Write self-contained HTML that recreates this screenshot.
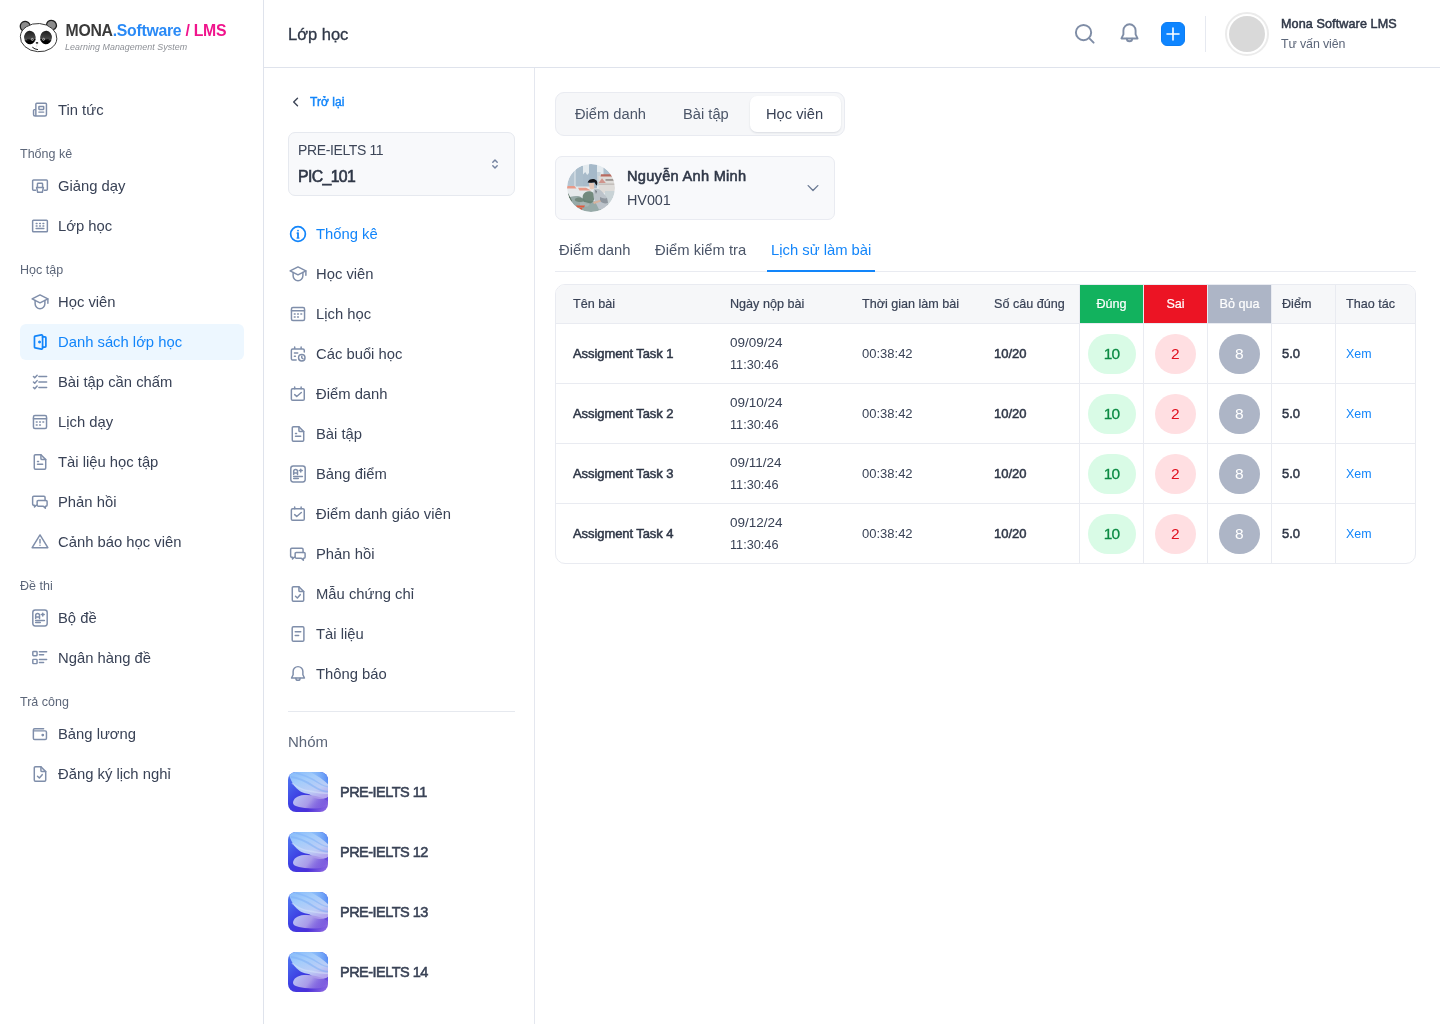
<!DOCTYPE html>
<html lang="vi">
<head>
<meta charset="utf-8">
<title>Lớp học - MONA.Software / LMS</title>
<style>
*{box-sizing:border-box;margin:0;padding:0}
html,body{width:1440px;height:1024px;overflow:hidden;background:#fff}
#side,#head,#p2,#main{opacity:.9999}
body{font-family:"Liberation Sans",sans-serif;color:#394256;font-size:15px;position:relative}
svg{display:block}
i{display:block;font-style:normal}
.ic{position:absolute;width:20px;height:20px;fill:none;stroke:#7f8eaa;color:#7f8eaa;stroke-width:1.600;stroke-linecap:round;stroke-linejoin:round}
.t{position:absolute;white-space:nowrap;line-height:20px}
#side{position:absolute;left:0;top:0;width:264px;height:1024px;border-right:1px solid #dfe3ec;background:#fff}
.logo{position:absolute;left:19px;top:18px;width:220px;height:36px;display:block}
.logo .panda{position:absolute;left:0;top:0}
.logo .l1{position:absolute;left:46.500px;top:4px;font-size:15.800px;line-height:18px;white-space:nowrap;letter-spacing:-.27px}
.logo .m{color:#3a3a3a}.logo .s{color:#2a8af6}.logo .p{color:#f0148c}
.logo .l2{position:absolute;left:46px;top:23px;font-size:8.900px;line-height:12px;font-style:italic;color:#8d9096;white-space:nowrap;letter-spacing:.05px}
#side .it{position:absolute;left:20px;width:224px;height:36px;border-radius:6px}
#side .it .ic{left:10px;top:8px}
#side .it .t{left:38px;top:8px;font-size:14.800px}
#side .it.on{background:#edf7ff}
#side .it.on .t,#p2 .it.on .t{color:#1285fa}
#side .it.on .ic,#p2 .it.on .ic{stroke:#1285fa;color:#1285fa;stroke-width:1.850}
#side .lb{position:absolute;left:20px;font-size:12.500px;margin-top:1px;color:#5c6679;line-height:16px}
#head{position:absolute;left:264px;top:0;width:1176px;height:68px;border-bottom:1px solid #dfe3ec;background:#fff}
#head .title{left:24px;top:24px;font-size:16.500px;color:#2f3747;-webkit-text-stroke:.3px #2f3747}
#head .hi{stroke-width:1.550;stroke:#7f8da6}
#head .plus{position:absolute;left:897px;top:22px;width:24px;height:24px;border-radius:6px;background:#0e85ff;border:1px solid #0b7df4}
#head .vdiv{position:absolute;left:941px;top:16px;width:1px;height:36px;background:#e6e9f0}
#head .ava{position:absolute;left:961px;top:12px;width:44px;height:44px;border-radius:50%;border:2px solid #ebebeb;padding:2px}
#head .ava i{width:36px;height:36px;border-radius:50%;background:#d9d9d9}
#head .un{left:1017px;top:14px;font-size:12.600px;color:#2f3747;letter-spacing:.1px;-webkit-text-stroke:.5px #2f3747}
#head .ur{left:1017px;top:34px;font-size:12.400px;color:#5c6679;letter-spacing:-.1px}
#p2{position:absolute;left:264px;top:68px;width:271px;height:956px;border-right:1px solid #e4e7ef;background:#fff}
#p2 .back{position:absolute;left:26.400px;top:28px}
#p2 .backt{left:46px;top:24px;font-size:12px;color:#1285fa;letter-spacing:.07px;-webkit-text-stroke:.45px #1285fa}
#p2 .sel{position:absolute;left:24px;top:64px;width:227px;height:64px;border:1px solid #e6e9ef;border-radius:7px;background:#f8f9fb}
#p2 .sel .s1{left:9px;top:7px;font-size:14px;color:#3d4658;letter-spacing:-.38px}
#p2 .sel .s2{left:9px;top:34px;font-size:15.800px;color:#2f3747;letter-spacing:-.62px;-webkit-text-stroke:.6px #2f3747}
#p2 .sel .ud{position:absolute;left:202px;top:25px}
#p2 .it{position:absolute;left:24px;width:226px;height:36px}
#p2 .it .ic{left:0;top:8px}
#p2 .it .t{left:28px;top:8px;font-size:14.800px}
#p2 .hr{position:absolute;left:24px;top:643px;width:227px;height:1px;background:#e6e9ef}
#p2 .nh{left:24px;top:664px;font-size:15px;color:#5c6679}
#p2 .g{position:absolute;left:24px;height:40px;width:226px}
#p2 .g .im{position:absolute;left:0;top:0;border-radius:8px;overflow:hidden}
#p2 .g .t{left:52px;top:10px;font-size:14.500px;color:#394256;letter-spacing:-.52px;-webkit-text-stroke:.55px #394256}
#main{position:absolute;left:535px;top:68px;width:905px;height:956px;background:#fff}
#main .tabs{position:absolute;left:20px;top:24px;width:290px;height:44px;border:1px solid #e9ebf1;border-radius:9px;background:#f6f7f9;font-size:14.700px;color:#4b5568}
#main .tabs>.t{top:11px}
#main .tabs .act{position:absolute;left:194px;top:3px;width:91px;height:36px;border-radius:7px;background:#fff;box-shadow:0 1px 2px rgba(20,30,60,.12)}
#main .tabs .act .t{left:16px;top:8px;color:#394256}
#main .stu{position:absolute;left:20px;top:88px;width:280px;height:64px;border:1px solid #e9ebf1;border-radius:7px;background:#f8f9fb}
#main .stu .av{position:absolute;left:11px;top:7px;border-radius:50%}
#main .stu .sn{left:71px;top:9px;font-size:14.600px;color:#2f3747;letter-spacing:.28px;-webkit-text-stroke:.55px #2f3747}
#main .stu .sc{left:71px;top:33px;font-size:14.400px;color:#3d4658;letter-spacing:-.05px}
#main .stu .chev{position:absolute;left:250px;top:24px}
#main .sub{position:absolute;left:20px;top:168px;width:861px;height:36px;border-bottom:1px solid #e9ebf1;font-size:14.800px;color:#4b5568}
#main .sub .t{top:4px}
#main .sub .on{color:#1285fa}
#main .sub .ul{position:absolute;left:212px;top:34px;width:108px;height:2px;background:#1285fa}
#main .tb{position:absolute;left:20px;top:216px;width:861px;height:280px;border:1px solid #e9ebf1;border-radius:10px;overflow:hidden;font-size:13px;color:#394256}
#main .th{position:absolute;left:0;top:0;width:100%;height:39px;background:#f6f7f9;border-bottom:1px solid #e9ebf1}
#main .th .t{top:9px;font-size:12.600px;-webkit-text-stroke:.2px currentColor}
#main .tr .t{margin-top:1px}
#main .th .hc{position:absolute;top:0;height:38px;color:#fff;text-align:center;line-height:39px;font-size:12.600px;-webkit-text-stroke:.2px #fff}
#main .tr{position:absolute;left:0;width:100%;height:60px;border-bottom:1px solid #e9ebf1}
#main .tr:last-of-type{border-bottom:0}
#main .b{color:#2f3747;-webkit-text-stroke:.5px #2f3747}
#main .tr .t.nm{font-size:13px;letter-spacing:-.08px}
#main .lk{color:#1285fa;font-size:12.400px}
#main .bd{position:absolute;top:10px;height:40px;border-radius:20px;text-align:center;line-height:40px;font-size:15.500px}
#main .bd.g{letter-spacing:-.8px;text-indent:-.8px;-webkit-text-stroke:.3px #0b8a43}
#main .bd.g{background:#d9fbe6;color:#0b8a43}
#main .bd.r{background:#ffdfe2;color:#e0101f}
#main .bd.s{background:#adb5c6;color:#fff}
#main .vl{position:absolute;top:0;width:1px;height:280px;background:#e9ebf1}
</style>
</head>
<body>
<div id="side">
<a class="logo">
<svg class="panda" viewBox="0 0 40 36" width="40" height="36"><defs><linearGradient id="pe" x1="0" y1="0" x2="0" y2="1"><stop offset="0" stop-color="#1c1c1c"/><stop offset=".62" stop-color="#4a4a4a"/><stop offset=".63" stop-color="#000"/><stop offset="1" stop-color="#000"/></linearGradient></defs>
<ellipse cx="6.300" cy="8.500" rx="5" ry="5.200" fill="#8c8c8c" stroke="#1e1e1e" stroke-width="1.300" transform="rotate(-30 6.300 8.500)"/>
<ellipse cx="32.500" cy="7.200" rx="5" ry="4.700" fill="#8c8c8c" stroke="#1e1e1e" stroke-width="1.300" transform="rotate(25 32.500 7.200)"/>
<ellipse cx="19.600" cy="19.600" rx="18.300" ry="14.100" fill="#fff" stroke="#2a2a2a" stroke-width=".9" transform="rotate(4 19.600 19.600)"/>
<ellipse cx="10.900" cy="19.500" rx="5.800" ry="6.800" fill="url(#pe)" transform="rotate(-6 10.900 19.500)"/>
<ellipse cx="27" cy="19.500" rx="5.900" ry="6.800" fill="url(#pe)" transform="rotate(6 27 19.500)"/>
<path d="M5.800 22.800q5-2.600 10.400-.3M21.600 22.500q5.400-2.300 10.600.3" fill="none" stroke="#6a6a6a" stroke-width=".5" opacity=".7"/>
<circle cx="13.300" cy="21.400" r="1" fill="#222" stroke="#e8e8e8" stroke-width=".7"/><circle cx="24.600" cy="21.300" r="1" fill="#222" stroke="#e8e8e8" stroke-width=".7"/>
<ellipse cx="18" cy="24.900" rx="1.300" ry=".8" fill="#1a1a1a"/><path d="M18.200 26l-.9 2.800" stroke="#bbb" stroke-width=".4" fill="none"/>
<path d="M13.600 29.400q2.300 2 5 2.200" fill="none" stroke="#1a1a1a" stroke-width="1" stroke-linecap="round"/>
</svg>
<span class="l1"><b class="m">MONA</b><b class="s">.Software</b> <b class="p">/ LMS</b></span>
<span class="l2">Learning Management System</span>
</a>
<div class="it" style="top:92px"><svg class="ic" viewBox="-.85 -.85 21.700 21.700"><path d="M5.5 16.6V3.7a1 1 0 0 1 1-1H16a1 1 0 0 1 1 1V15a1.6 1.6 0 0 1-1.6 1.6H4.6A1.6 1.6 0 0 1 3 15v-4.4a1 1 0 0 1 1-1h1.5"/><rect x="8.8" y="6.1" width="5.2" height="3.3" rx=".4"/><path d="M8.8 12.3h5.2"/></svg><span class="t">Tin tức</span></div>
<div class="it" style="top:168px"><svg class="ic" viewBox="-.85 -.85 21.700 21.700"><path d="M5.2 14.5H3a1 1 0 0 1-1-1V4.6a1 1 0 0 1 1-1h14a1 1 0 0 1 1 1v8.9a1 1 0 0 1-1 1h-2.3"/><path d="M7.2 11V7.8a.8.8 0 0 1 .8-.8h4a.8.8 0 0 1 .8.8V11"/><path d="M6.3 11.6h7.4l-1.2 5.2h-5z"/></svg><span class="t">Giảng dạy</span></div>
<div class="it" style="top:208px"><svg class="ic" viewBox="-.85 -.85 21.700 21.700"><rect x="2" y="3.7" width="16" height="12.6" rx=".9"/><path d="M5.9 7.2h.9M9.55 7.2h.9M13.2 7.2h.9M5.9 10h.9M9.55 10h.9M13.2 10h.9M5.8 12.7h8.4"/></svg><span class="t">Lớp học</span></div>
<div class="it" style="top:284px"><svg class="ic" viewBox="-.85 -.85 21.700 21.700"><path d="M10 2.300 1.450 6.600 10 10.900l8.550-4.300z"/><path d="M18.550 6.600v4.800"/><path d="M4.700 8.300v3.700a5.300 5.300 0 0 0 10.600 0V8.300"/></svg><span class="t">Học viên</span></div>
<div class="it on" style="top:324px"><svg class="ic" viewBox="-.85 -.85 21.700 21.700"><path d="M4 4.6a1 1 0 0 1 .8-1l6.8-1.3a1 1 0 0 1 1.2 1v13.4a1 1 0 0 1-1.2 1l-6.8-1.3a1 1 0 0 1-.8-1z"/><path d="M12.8 4.5h2.6a1 1 0 0 1 1 1v9a1 1 0 0 1-1 1h-2.6"/><circle cx="9.5" cy="10" r=".7" fill="currentColor"/></svg><span class="t">Danh sách lớp học</span></div>
<div class="it" style="top:364px"><svg class="ic" viewBox="-.85 -.85 21.700 21.700"><path d="M2.9 4.1l1.4 1.4 2.6-2.9M8.8 4.1h8.4"/><path d="M2.9 10l1.4 1.4 2.6-2.9M8.8 10h8.4"/><path d="M2.9 15.9l1.4 1.4 2.6-2.9M8.8 15.9h8.4"/></svg><span class="t">Bài tập cần chấm</span></div>
<div class="it" style="top:404px"><svg class="ic" viewBox="-.85 -.85 21.700 21.700"><rect x="2.9" y="3" width="14.2" height="14" rx="1.6"/><path d="M2.9 6.4h14.2"/><path d="M6 10h.9M9.55 10h.9M13.1 10h.9M6 13.3h.9M9.55 13.3h.9"/></svg><span class="t">Lịch dạy</span></div>
<div class="it" style="top:444px"><svg class="ic" viewBox="-.85 -.85 21.700 21.700"><path d="M11 2.2H5a1.2 1.2 0 0 0-1.2 1.2v13.2A1.2 1.2 0 0 0 5 17.8h10a1.2 1.2 0 0 0 1.2-1.2V7.4z"/><path d="M11 2.2v4a1.2 1.2 0 0 0 1.2 1.2h4"/><path d="M7.3 9.4h1.1M7.3 12.4h5.6"/></svg><span class="t">Tài liệu học tập</span></div>
<div class="it" style="top:484px"><svg class="ic" viewBox="-.85 -.85 21.700 21.700"><path d="M6.9 13.5H5.9l-1.9 2v-2h-.8A1.2 1.2 0 0 1 2 12.3V5a1.2 1.2 0 0 1 1.2-1.2h11.1A1.2 1.2 0 0 1 15.5 5v3.3"/><path d="M8.1 8.3h8.4a1.2 1.2 0 0 1 1.2 1.2v3.8a1.2 1.2 0 0 1-1.2 1.2h-.7v2.2l-2.2-2.2H8.100a1.2 1.2 0 0 1-1.2-1.200V9.500a1.200 1.200 0 0 1 1.200-1.200z"/></svg><span class="t">Phản hồi</span></div>
<div class="it" style="top:524px"><svg class="ic" viewBox="-.85 -.85 21.700 21.700"><path d="M10 2.300l8.500 13.900h-17z"/><path d="M10 7.300v3.900M10 13.400v.1"/></svg><span class="t">Cảnh báo học viên</span></div>
<div class="it" style="top:600px"><svg class="ic" viewBox="-.85 -.85 21.700 21.700"><rect x="2.2" y="1.3" width="15.6" height="17.3" rx="2.6"/><path d="M5.3 10.6V7.3a2.1 2.1 0 0 1 4.200 0v3.3M5.3 8.800h4.200M13 4.700v3.200M11.4 6.300h3.200M5.300 12.600h9.500M5.300 14.900h5"/></svg><span class="t">Bộ đề</span></div>
<div class="it" style="top:640px"><svg class="ic" viewBox="-.85 -.85 21.700 21.700"><rect x="2.2" y="3" width="4.600" height="4.600" rx=".8"/><rect x="2.200" y="11.500" width="4.600" height="4.600" rx=".8"/><path d="M9.400 3.200h7.800M9.400 6.500h4.500M9.400 11.700h7.800M9.400 14.800h4.500"/></svg><span class="t">Ngân hàng đề</span></div>
<div class="it" style="top:716px"><svg class="ic" viewBox="-.85 -.85 21.700 21.700"><path d="M13.900 4.200H4.200a1.400 1.400 0 0 0-1.400 1.400v9a1.400 1.400 0 0 0 1.400 1.400h11.400a1.400 1.400 0 0 0 1.400-1.400V8a1.400 1.400 0 0 0-1.400-1.400H2.800"/><circle cx="13" cy="11.100" r=".7" fill="currentColor"/></svg><span class="t">Bảng lương</span></div>
<div class="it" style="top:756px"><svg class="ic" viewBox="-.85 -.85 21.700 21.700"><path d="M11 2.2H5a1.2 1.2 0 0 0-1.2 1.2v13.2A1.2 1.2 0 0 0 5 17.8h10a1.2 1.2 0 0 0 1.2-1.2V7.4z"/><path d="M11 2.2v4a1.2 1.2 0 0 0 1.2 1.2h4"/><path d="M7.300 12.400l2 1.900 3.100-3.600"/></svg><span class="t">Đăng ký lịch nghỉ</span></div>
<div class="lb" style="top:145px">Thống kê</div>
<div class="lb" style="top:261px">Học tập</div>
<div class="lb" style="top:577px">Đề thi</div>
<div class="lb" style="top:693px">Trả công</div>
</div>
<div id="head">
<div class="t title">Lớp học</div>
<svg class="ic hi" viewBox="0 0 20 20" style="left:809.700px;top:22.600px;width:21.200px;height:21.200px;stroke-width:1.850"><circle cx="9" cy="9" r="7.200"/><path d="M14.300 14.300l4.200 4.200"/></svg>
<svg class="ic hi" viewBox="0 0 20 20" style="left:853.500px;top:22.400px;width:23px;height:23px;stroke-width:1.650"><path d="M10 2a5.300 5.300 0 0 0-5.300 5.300v3.500L3 14.300h14l-1.700-3.500V7.300A5.300 5.300 0 0 0 10 2z"/><path d="M7.700 14.500a2.300 2.300 0 0 0 4.600 0"/></svg>
<div class="plus"><svg viewBox="0 0 24 24" width="24" height="24" style="margin:-1px"><path d="M12 6v12M6 12h12" stroke="#fff" stroke-width="1.600" fill="none" stroke-linecap="round"/></svg></div>
<div class="vdiv"></div>
<div class="ava"><i></i></div>
<div class="t un">Mona Software LMS</div>
<div class="t ur">Tư vấn viên</div>
</div>
<div id="p2">
<svg class="back" viewBox="0 0 12 12" width="12" height="12"><path d="M7.500 2.200 3.700 6l3.800 3.800" fill="none" stroke="#3d4557" stroke-width="1.400" stroke-linecap="round" stroke-linejoin="round"/></svg>
<div class="t backt">Trở lại</div>
<div class="sel"><div class="t s1">PRE-IELTS 11</div><div class="t s2">PIC_101</div>
<svg class="ud" viewBox="0 0 8 12" width="8" height="12"><path d="M1.800 4.300 4 2.100l2.200 2.200M1.800 7.700 4 9.900l2.200-2.200" fill="none" stroke="#7483a0" stroke-width="1.450" stroke-linecap="round" stroke-linejoin="round"/></svg></div>
<div class="it on" style="top:148px"><svg class="ic" viewBox="-.85 -.85 21.700 21.700"><circle cx="10" cy="10" r="8"/><path d="M10 9v5.200" stroke-width="1.900"/><path d="M8.900 9H10M8.800 14.300h2.400" stroke-width="1.200"/><circle cx="10" cy="6.300" r="1" fill="currentColor" stroke="none"/></svg><span class="t">Thống kê</span></div>
<div class="it" style="top:188px"><svg class="ic" viewBox="-.85 -.85 21.700 21.700"><path d="M10 2.300 1.450 6.600 10 10.900l8.550-4.300z"/><path d="M18.550 6.600v4.800"/><path d="M4.700 8.300v3.700a5.300 5.300 0 0 0 10.600 0V8.300"/></svg><span class="t">Học viên</span></div>
<div class="it" style="top:228px"><svg class="ic" viewBox="-.85 -.85 21.700 21.700"><rect x="2.9" y="3" width="14.2" height="14" rx="1.6"/><path d="M2.9 6.4h14.2"/><path d="M6 10h.9M9.55 10h.9M13.1 10h.9M6 13.3h.9M9.55 13.3h.9"/></svg><span class="t">Lịch học</span></div>
<div class="it" style="top:268px"><svg class="ic" viewBox="-.85 -.85 21.700 21.700"><path d="M8 16.500H4.200a1.400 1.400 0 0 1-1.400-1.400V6a1.400 1.400 0 0 1 1.400-1.400h11.200a1.400 1.400 0 0 1 1.400 1.400v1.800M6.400 2.500v2.100M13.400 2.500v2.100M6.100 8.900h3.600M6.100 12.400h1.100"/><circle cx="14.100" cy="14" r="3.500"/><path d="M14.100 12.300v1.900l1.200.7"/></svg><span class="t">Các buổi học</span></div>
<div class="it" style="top:308px"><svg class="ic" viewBox="-.85 -.85 21.700 21.700"><rect x="2.800" y="4.300" width="14" height="12.600" rx="1.400"/><path d="M6.400 2.500v1.800M13.400 2.500v1.800M6.400 10.700l2.200 2 5-4.400"/></svg><span class="t">Điểm danh</span></div>
<div class="it" style="top:348px"><svg class="ic" viewBox="-.85 -.85 21.700 21.700"><path d="M11 2.2H5a1.2 1.2 0 0 0-1.2 1.2v13.2A1.2 1.2 0 0 0 5 17.8h10a1.2 1.2 0 0 0 1.2-1.2V7.4z"/><path d="M11 2.2v4a1.2 1.2 0 0 0 1.2 1.2h4"/><path d="M7.3 9.4h1.1M7.3 12.4h5.6"/></svg><span class="t">Bài tập</span></div>
<div class="it" style="top:388px"><svg class="ic" viewBox="-.85 -.85 21.700 21.700"><rect x="2.2" y="1.3" width="15.6" height="17.3" rx="2.6"/><path d="M5.3 10.6V7.3a2.1 2.1 0 0 1 4.200 0v3.3M5.3 8.800h4.200M13 4.700v3.200M11.4 6.300h3.200M5.300 12.600h9.500M5.300 14.900h5"/></svg><span class="t">Bảng điểm</span></div>
<div class="it" style="top:428px"><svg class="ic" viewBox="-.85 -.85 21.700 21.700"><rect x="2.800" y="4.300" width="14" height="12.600" rx="1.400"/><path d="M6.400 2.500v1.800M13.400 2.500v1.800M6.400 10.700l2.200 2 5-4.400"/></svg><span class="t">Điểm danh giáo viên</span></div>
<div class="it" style="top:468px"><svg class="ic" viewBox="-.85 -.85 21.700 21.700"><path d="M6.9 13.5H5.9l-1.9 2v-2h-.8A1.2 1.2 0 0 1 2 12.3V5a1.2 1.2 0 0 1 1.2-1.2h11.1A1.2 1.2 0 0 1 15.5 5v3.3"/><path d="M8.1 8.3h8.4a1.2 1.2 0 0 1 1.2 1.2v3.8a1.2 1.2 0 0 1-1.2 1.2h-.7v2.2l-2.2-2.2H8.100a1.2 1.2 0 0 1-1.2-1.200V9.500a1.200 1.200 0 0 1 1.200-1.200z"/></svg><span class="t">Phản hồi</span></div>
<div class="it" style="top:508px"><svg class="ic" viewBox="-.85 -.85 21.700 21.700"><path d="M11 2.2H5a1.2 1.2 0 0 0-1.2 1.2v13.2A1.2 1.2 0 0 0 5 17.8h10a1.2 1.2 0 0 0 1.2-1.2V7.4z"/><path d="M11 2.2v4a1.2 1.2 0 0 0 1.2 1.2h4"/><path d="M7.300 12.400l2 1.900 3.100-3.600"/></svg><span class="t">Mẫu chứng chỉ</span></div>
<div class="it" style="top:548px"><svg class="ic" viewBox="-.85 -.85 21.700 21.700"><rect x="3.700" y="2.100" width="12.700" height="15.800" rx="1.400"/><path d="M7 7.500h6M7 11.600h3.700"/></svg><span class="t">Tài liệu</span></div>
<div class="it" style="top:588px"><svg class="ic" viewBox="-.85 -.85 21.700 21.700"><path d="M10 2a5.300 5.300 0 0 0-5.300 5.300v3.500L3 14.300h14l-1.700-3.500V7.300A5.300 5.300 0 0 0 10 2z"/><path d="M7.700 14.500a2.300 2.300 0 0 0 4.600 0"/></svg><span class="t">Thông báo</span></div>
<div class="hr"></div><div class="t nh">Nhóm</div>
<div class="g" style="top:704px"><svg class="im" viewBox="0 0 40 40" width="40" height="40"><defs>
<linearGradient id="ga0" x1="0" y1="0" x2="1" y2="1"><stop offset="0" stop-color="#4f7cf3"/><stop offset=".45" stop-color="#3d3ee2"/><stop offset=".72" stop-color="#4a30d9"/><stop offset="1" stop-color="#9a74e3"/></linearGradient>
<linearGradient id="gb0" x1=".1" y1="0" x2=".7" y2="1"><stop offset="0" stop-color="#86bbfa"/><stop offset=".35" stop-color="#a3ccfb"/><stop offset=".72" stop-color="#bccdf6"/><stop offset="1" stop-color="#b4a6ee"/></linearGradient>
<linearGradient id="gc0" x1="0" y1="0" x2="1" y2=".3"><stop offset="0" stop-color="#bcc8f5"/><stop offset=".55" stop-color="#a99be9"/><stop offset="1" stop-color="#9d7be2" stop-opacity=".3"/></linearGradient>
<linearGradient id="gd0" x1="0" y1="0" x2="1" y2="0"><stop offset="0" stop-color="#5d9ff6" stop-opacity="0"/><stop offset="1" stop-color="#4f86f4"/></linearGradient>
<filter id="gf0" x="-10%" y="-10%" width="120%" height="120%"><feGaussianBlur stdDeviation=".7"/></filter></defs>
<rect width="40" height="40" fill="url(#ga0)"/>
<g filter="url(#gf0)">
<path d="M1 3C4 0 9-1 14-1h28v24c-2 2.500-6 4.500-11 4-4-.3-6-1.800-8-3.800-2-1.500-5-1.500-9-3C9 18 4 12 1 3z" fill="url(#gb0)"/>
<path d="M20-1h22v15C36 8 29 3 20-1z" fill="url(#gd0)"/>
<path d="M3 5c8 1 16 5 22 9s10 6 17 6" fill="none" stroke="#7eaef6" stroke-width="1.800" opacity=".55"/>
<path d="M8 1c8 2 15 5 21 9s9 5 13 5" fill="none" stroke="#7db0f7" stroke-width="1.500" opacity=".5"/>
<path d="M4 11c5 5 11 7 17 8s12 3 20 2" fill="none" stroke="#d5e2fa" stroke-width="1.600" opacity=".55"/>
<path d="M5 31c0-4 4-7.500 11-8s14 1 20 4c4 2 6 4 4 6s-9 4-17 3.500S5 35 5 31z" fill="url(#gc0)"/>
</g>
</svg><span class="t">PRE-IELTS 11</span></div>
<div class="g" style="top:764px"><svg class="im" viewBox="0 0 40 40" width="40" height="40"><defs>
<linearGradient id="ga1" x1="0" y1="0" x2="1" y2="1"><stop offset="0" stop-color="#4f7cf3"/><stop offset=".45" stop-color="#3d3ee2"/><stop offset=".72" stop-color="#4a30d9"/><stop offset="1" stop-color="#9a74e3"/></linearGradient>
<linearGradient id="gb1" x1=".1" y1="0" x2=".7" y2="1"><stop offset="0" stop-color="#86bbfa"/><stop offset=".35" stop-color="#a3ccfb"/><stop offset=".72" stop-color="#bccdf6"/><stop offset="1" stop-color="#b4a6ee"/></linearGradient>
<linearGradient id="gc1" x1="0" y1="0" x2="1" y2=".3"><stop offset="0" stop-color="#bcc8f5"/><stop offset=".55" stop-color="#a99be9"/><stop offset="1" stop-color="#9d7be2" stop-opacity=".3"/></linearGradient>
<linearGradient id="gd1" x1="0" y1="0" x2="1" y2="0"><stop offset="0" stop-color="#5d9ff6" stop-opacity="0"/><stop offset="1" stop-color="#4f86f4"/></linearGradient>
<filter id="gf1" x="-10%" y="-10%" width="120%" height="120%"><feGaussianBlur stdDeviation=".7"/></filter></defs>
<rect width="40" height="40" fill="url(#ga1)"/>
<g filter="url(#gf1)">
<path d="M1 3C4 0 9-1 14-1h28v24c-2 2.500-6 4.500-11 4-4-.3-6-1.800-8-3.800-2-1.500-5-1.500-9-3C9 18 4 12 1 3z" fill="url(#gb1)"/>
<path d="M20-1h22v15C36 8 29 3 20-1z" fill="url(#gd1)"/>
<path d="M3 5c8 1 16 5 22 9s10 6 17 6" fill="none" stroke="#7eaef6" stroke-width="1.800" opacity=".55"/>
<path d="M8 1c8 2 15 5 21 9s9 5 13 5" fill="none" stroke="#7db0f7" stroke-width="1.500" opacity=".5"/>
<path d="M4 11c5 5 11 7 17 8s12 3 20 2" fill="none" stroke="#d5e2fa" stroke-width="1.600" opacity=".55"/>
<path d="M5 31c0-4 4-7.500 11-8s14 1 20 4c4 2 6 4 4 6s-9 4-17 3.500S5 35 5 31z" fill="url(#gc1)"/>
</g>
</svg><span class="t">PRE-IELTS 12</span></div>
<div class="g" style="top:824px"><svg class="im" viewBox="0 0 40 40" width="40" height="40"><defs>
<linearGradient id="ga2" x1="0" y1="0" x2="1" y2="1"><stop offset="0" stop-color="#4f7cf3"/><stop offset=".45" stop-color="#3d3ee2"/><stop offset=".72" stop-color="#4a30d9"/><stop offset="1" stop-color="#9a74e3"/></linearGradient>
<linearGradient id="gb2" x1=".1" y1="0" x2=".7" y2="1"><stop offset="0" stop-color="#86bbfa"/><stop offset=".35" stop-color="#a3ccfb"/><stop offset=".72" stop-color="#bccdf6"/><stop offset="1" stop-color="#b4a6ee"/></linearGradient>
<linearGradient id="gc2" x1="0" y1="0" x2="1" y2=".3"><stop offset="0" stop-color="#bcc8f5"/><stop offset=".55" stop-color="#a99be9"/><stop offset="1" stop-color="#9d7be2" stop-opacity=".3"/></linearGradient>
<linearGradient id="gd2" x1="0" y1="0" x2="1" y2="0"><stop offset="0" stop-color="#5d9ff6" stop-opacity="0"/><stop offset="1" stop-color="#4f86f4"/></linearGradient>
<filter id="gf2" x="-10%" y="-10%" width="120%" height="120%"><feGaussianBlur stdDeviation=".7"/></filter></defs>
<rect width="40" height="40" fill="url(#ga2)"/>
<g filter="url(#gf2)">
<path d="M1 3C4 0 9-1 14-1h28v24c-2 2.500-6 4.500-11 4-4-.3-6-1.800-8-3.800-2-1.500-5-1.500-9-3C9 18 4 12 1 3z" fill="url(#gb2)"/>
<path d="M20-1h22v15C36 8 29 3 20-1z" fill="url(#gd2)"/>
<path d="M3 5c8 1 16 5 22 9s10 6 17 6" fill="none" stroke="#7eaef6" stroke-width="1.800" opacity=".55"/>
<path d="M8 1c8 2 15 5 21 9s9 5 13 5" fill="none" stroke="#7db0f7" stroke-width="1.500" opacity=".5"/>
<path d="M4 11c5 5 11 7 17 8s12 3 20 2" fill="none" stroke="#d5e2fa" stroke-width="1.600" opacity=".55"/>
<path d="M5 31c0-4 4-7.500 11-8s14 1 20 4c4 2 6 4 4 6s-9 4-17 3.500S5 35 5 31z" fill="url(#gc2)"/>
</g>
</svg><span class="t">PRE-IELTS 13</span></div>
<div class="g" style="top:884px"><svg class="im" viewBox="0 0 40 40" width="40" height="40"><defs>
<linearGradient id="ga3" x1="0" y1="0" x2="1" y2="1"><stop offset="0" stop-color="#4f7cf3"/><stop offset=".45" stop-color="#3d3ee2"/><stop offset=".72" stop-color="#4a30d9"/><stop offset="1" stop-color="#9a74e3"/></linearGradient>
<linearGradient id="gb3" x1=".1" y1="0" x2=".7" y2="1"><stop offset="0" stop-color="#86bbfa"/><stop offset=".35" stop-color="#a3ccfb"/><stop offset=".72" stop-color="#bccdf6"/><stop offset="1" stop-color="#b4a6ee"/></linearGradient>
<linearGradient id="gc3" x1="0" y1="0" x2="1" y2=".3"><stop offset="0" stop-color="#bcc8f5"/><stop offset=".55" stop-color="#a99be9"/><stop offset="1" stop-color="#9d7be2" stop-opacity=".3"/></linearGradient>
<linearGradient id="gd3" x1="0" y1="0" x2="1" y2="0"><stop offset="0" stop-color="#5d9ff6" stop-opacity="0"/><stop offset="1" stop-color="#4f86f4"/></linearGradient>
<filter id="gf3" x="-10%" y="-10%" width="120%" height="120%"><feGaussianBlur stdDeviation=".7"/></filter></defs>
<rect width="40" height="40" fill="url(#ga3)"/>
<g filter="url(#gf3)">
<path d="M1 3C4 0 9-1 14-1h28v24c-2 2.500-6 4.500-11 4-4-.3-6-1.800-8-3.800-2-1.500-5-1.500-9-3C9 18 4 12 1 3z" fill="url(#gb3)"/>
<path d="M20-1h22v15C36 8 29 3 20-1z" fill="url(#gd3)"/>
<path d="M3 5c8 1 16 5 22 9s10 6 17 6" fill="none" stroke="#7eaef6" stroke-width="1.800" opacity=".55"/>
<path d="M8 1c8 2 15 5 21 9s9 5 13 5" fill="none" stroke="#7db0f7" stroke-width="1.500" opacity=".5"/>
<path d="M4 11c5 5 11 7 17 8s12 3 20 2" fill="none" stroke="#d5e2fa" stroke-width="1.600" opacity=".55"/>
<path d="M5 31c0-4 4-7.500 11-8s14 1 20 4c4 2 6 4 4 6s-9 4-17 3.500S5 35 5 31z" fill="url(#gc3)"/>
</g>
</svg><span class="t">PRE-IELTS 14</span></div>
</div>
<div id="main">
<div class="tabs"><span class="t" style="left:19px">Điểm danh</span><span class="t" style="left:127px">Bài tập</span><div class="act"><span class="t">Học viên</span></div></div>
<div class="stu">
<svg class="av" viewBox="0 0 48 48" width="48" height="48"><defs><clipPath id="avc"><circle cx="24" cy="24" r="24"/></clipPath><filter id="avf" x="-10%" y="-10%" width="120%" height="120%"><feGaussianBlur stdDeviation=".75"/></filter></defs><g clip-path="url(#avc)"><g filter="url(#avf)">
<rect x="-2" y="-2" width="52" height="52" fill="#e4ebef"/>
<rect x="0" y="7" width="7.500" height="17" fill="#b5c5d1"/><rect x="8.500" y="1.500" width="7.500" height="22" fill="#abbecc"/><path d="M16 10.500l2.200-2.500 2 3 1.800-2v14h-6z" fill="#a8bbca"/>
<rect x="22" y="-1" width="8" height="25" fill="#a5b9c9"/><rect x="30" y="8" width="3.500" height="14" fill="#c8d4dc"/><rect x="36.500" y="3" width="7" height="12" fill="#adc0cd"/>
<rect x="-1" y="22.500" width="27" height="11" fill="#e6eaec"/><path d="M-1 22h8.500l2 2.400H-1zM11 23.800h8l5 2.800H12.500z" fill="#e79a89"/>
<rect x="31.500" y="12" width="18" height="17" fill="#dedcd9"/><path d="M34 10.200h11l1.200 2.200H33.500z" fill="#b96a5e"/><path d="M35 14.300l3.800 4.800h-7.300z" fill="#d0958d"/><rect x="38.500" y="15.200" width="10" height="1.500" fill="#8f8884"/><rect x="31.500" y="19.500" width="17" height="1.300" fill="#bdb9b5"/>
<rect x="38" y="27" width="11" height="15" fill="#c9d3d6"/>
<path d="M-1 35c4-2.500 9-3.500 14-2.500l6 4 10 1 20 4v8H-1z" fill="#97aaa8"/>
<path d="M16 31c1-3 5-4.500 8-3.500s4 4 3 8-5 5-8 4-4-5-3-8.500z" fill="#667f72" opacity=".9"/><path d="M8 35c2-2 6-2 8 0s0 3-3 3-6-1-5-3z" fill="#6c8477" opacity=".85"/><path d="M1 29c1 2 3 5 4 8l-2 1c-1-3-2-6-2-9z" fill="#5f7768"/>
<path d="M13 38.500c3-1 7-.5 10 1l-2 3-8 .5z" fill="#aab8b6" opacity=".8"/>
<path d="M9 41.500h9l-1 2H10z" fill="#e05a3e"/><rect x="13" y="44" width="2.200" height="1.500" fill="#e05a3e"/>
<path d="M27 24.500c3-.5 6 .5 8 3l5 6c1 3 1 7 0 11l-8 1-4-8c-2-4-2-9-1-13z" fill="#bcc3ca"/><path d="M33 33c2 1 5 2 7 1l1 5c-3 1-6 0-8-2z" fill="#8f979f"/><path d="M28 26l2 1-1 3z" fill="#6d747c"/>
<path d="M21.800 19h5.400v5.200c-1 1.500-3 1.500-4.400.5z" fill="#e6c9ba"/>
<path d="M20.600 18.400c1-3 4-4 7-3.200 2.500.8 3.500 3.400 2.200 6.400-1-.5-1.500-1.800-2-3-2.500.2-5 .2-7.200-.2z" fill="#15181d"/>
<path d="M26 38l7-2 1 1.500-7 2.500z" fill="#d9b39d"/>
</g></g></svg>
<div class="t sn">Nguyễn Anh Minh</div><div class="t sc">HV001</div>
<svg class="chev" viewBox="0 0 14 14" width="14" height="14"><path d="M2.200 4.600 7 9.500l4.800-4.900" fill="none" stroke="#6b7a93" stroke-width="1.350" stroke-linecap="round" stroke-linejoin="round"/></svg>
</div>
<div class="sub"><span class="t" style="left:4px">Điểm danh</span><span class="t" style="left:100px">Điểm kiểm tra</span><span class="t on" style="left:216px">Lịch sử làm bài</span><i class="ul"></i></div>
<div class="tb">
<div class="th">
<span class="t" style="left:17px">Tên bài</span><span class="t" style="left:174px">Ngày nộp bài</span><span class="t" style="left:306px">Thời gian làm bài</span><span class="t" style="left:438px">Số câu đúng</span>
<div class="hc" style="left:524px;width:63px;background:#12b25e"><span>Đúng</span></div>
<div class="hc" style="left:588px;width:63px;background:#ec1424"><span>Sai</span></div>
<div class="hc" style="left:652px;width:63px;background:#adb5c6"><span>Bỏ qua</span></div>
<span class="t" style="left:726px">Điểm</span><span class="t" style="left:790px">Thao tác</span>
</div>
<div class="tr" style="top:39px">
<span class="t b nm" style="left:17px;top:19px">Assigment Task 1</span><span class="t" style="left:174px;top:8px;font-size:13.500px">09/09/24</span><span class="t" style="left:174px;top:30px;font-size:12.700px">11:30:46</span>
<span class="t" style="left:306px;top:19px">00:38:42</span><span class="t b" style="left:438px;top:19px">10/20</span>
<div class="bd g" style="left:532px;width:48px">10</div><div class="bd r" style="left:598.800px;width:41px">2</div><div class="bd s" style="left:662.900px;width:41px">8</div>
<span class="t b" style="left:726px;top:19px">5.0</span><span class="t lk" style="left:790px;top:19px">Xem</span>
</div>
<div class="tr" style="top:99px">
<span class="t b nm" style="left:17px;top:19px">Assigment Task 2</span><span class="t" style="left:174px;top:8px;font-size:13.500px">09/10/24</span><span class="t" style="left:174px;top:30px;font-size:12.700px">11:30:46</span>
<span class="t" style="left:306px;top:19px">00:38:42</span><span class="t b" style="left:438px;top:19px">10/20</span>
<div class="bd g" style="left:532px;width:48px">10</div><div class="bd r" style="left:598.800px;width:41px">2</div><div class="bd s" style="left:662.900px;width:41px">8</div>
<span class="t b" style="left:726px;top:19px">5.0</span><span class="t lk" style="left:790px;top:19px">Xem</span>
</div>
<div class="tr" style="top:159px">
<span class="t b nm" style="left:17px;top:19px">Assigment Task 3</span><span class="t" style="left:174px;top:8px;font-size:13.500px">09/11/24</span><span class="t" style="left:174px;top:30px;font-size:12.700px">11:30:46</span>
<span class="t" style="left:306px;top:19px">00:38:42</span><span class="t b" style="left:438px;top:19px">10/20</span>
<div class="bd g" style="left:532px;width:48px">10</div><div class="bd r" style="left:598.800px;width:41px">2</div><div class="bd s" style="left:662.900px;width:41px">8</div>
<span class="t b" style="left:726px;top:19px">5.0</span><span class="t lk" style="left:790px;top:19px">Xem</span>
</div>
<div class="tr" style="top:219px">
<span class="t b nm" style="left:17px;top:19px">Assigment Task 4</span><span class="t" style="left:174px;top:8px;font-size:13.500px">09/12/24</span><span class="t" style="left:174px;top:30px;font-size:12.700px">11:30:46</span>
<span class="t" style="left:306px;top:19px">00:38:42</span><span class="t b" style="left:438px;top:19px">10/20</span>
<div class="bd g" style="left:532px;width:48px">10</div><div class="bd r" style="left:598.800px;width:41px">2</div><div class="bd s" style="left:662.900px;width:41px">8</div>
<span class="t b" style="left:726px;top:19px">5.0</span><span class="t lk" style="left:790px;top:19px">Xem</span>
</div>
<i class="vl" style="left:523px"></i><i class="vl" style="left:587px"></i><i class="vl" style="left:651px"></i><i class="vl" style="left:715px"></i><i class="vl" style="left:779px"></i>
</div>
</div>
</body>
</html>
